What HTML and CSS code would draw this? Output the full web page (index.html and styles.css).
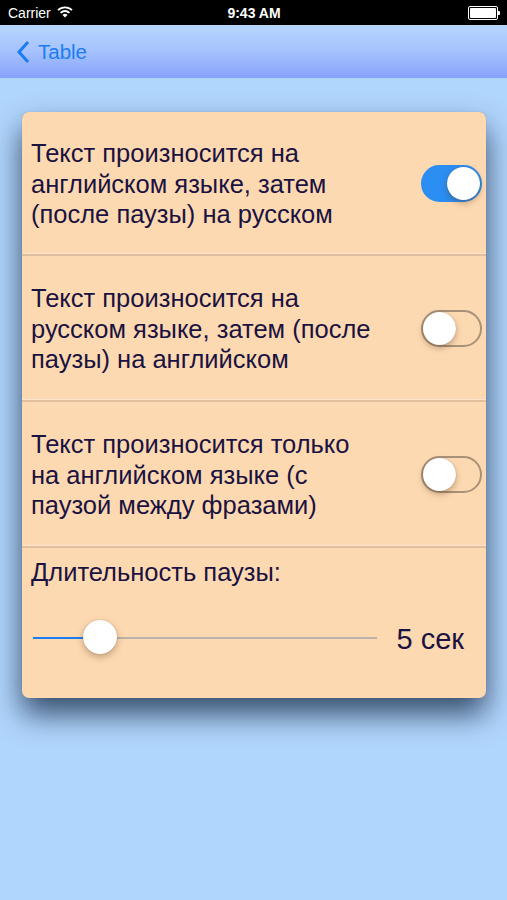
FILE: index.html
```html
<!DOCTYPE html>
<html lang="ru">
<head>
    <meta charset="UTF-8">
    <meta name="viewport" content="width=device-width, initial-scale=1.0">
    <title>Настройки</title>
    <link rel="stylesheet" href="styles.css">
</head>
<body>
    <div class="status-bar">
        <div class="status-left">
            <span>Carrier</span>
            <svg class="wifi" width="16" height="12" viewBox="0 0 16 12">
                <path d="M1 4.2 A10 10 0 0 1 15 4.2" fill="none" stroke="white" stroke-width="1.8"/>
                <path d="M3.6 6.8 A6.3 6.3 0 0 1 12.4 6.8" fill="none" stroke="white" stroke-width="1.8"/>
                <path d="M5.5 9 L8 11.5 L10.5 9 A3.5 3.5 0 0 0 5.5 9 Z" fill="white"/>
            </svg>
        </div>
        <div class="status-time">9:43 AM</div>
        <div class="status-right">
            <div class="battery"><div class="battery-fill"></div></div>
            <div class="battery-tip"></div>
        </div>
    </div>

    <div class="nav-bar">
        <a class="back-link" href="#">
            <svg width="14" height="24" viewBox="0 0 14 24">
                <path d="M12 2 L3 12 L12 22" fill="none" stroke="#1c7cf4" stroke-width="3"/>
            </svg>
            <span>Table</span>
        </a>
    </div>

    <div class="content">
        <div class="card">
            <div class="row">
                <div class="row-text">Текст произносится на английском языке, затем (после паузы) на русском</div>
                <div class="switch on"><div class="knob"></div></div>
            </div>
            <div class="row">
                <div class="row-text">Текст произносится на русском языке, затем (после паузы) на английском</div>
                <div class="switch"><div class="knob"></div></div>
            </div>
            <div class="row">
                <div class="row-text">Текст произносится только на английском языке (с паузой между фразами)</div>
                <div class="switch"><div class="knob"></div></div>
            </div>
            <div class="row-pause">
                <div class="pause-label">Длительность паузы:</div>
                <div class="slider-line">
                    <div class="slider">
                        <div class="track-filled" style="width: 67px;"></div>
                        <div class="thumb" style="left: 50px;"></div>
                    </div>
                    <div class="slider-value">5 сек</div>
                </div>
            </div>
        </div>
    </div>
</body>
</html>
```

FILE: styles.css
```css
body { margin: 0; font-family: "Liberation Sans", Arial, sans-serif; background: #b1d6fd; height: 900px; overflow: hidden; }

.status-bar { background: #000; color: white; height: 25px; display: flex; align-items: center; justify-content: space-between; padding: 0 7px 0 8px; font-size: 14px; position: relative; }
.status-left { display: flex; align-items: center; gap: 6px; width: 120px; }
.wifi { margin-top: -1px; }
.status-time { font-weight: bold; font-size: 14px; }
.status-right { display: flex; align-items: center; justify-content: flex-end; width: 120px; }
.battery { width: 26px; height: 10px; border: 1px solid white; border-radius: 2px; padding: 1px; }
.battery-fill { background: white; height: 100%; border-radius: 1px; }
.battery-tip { width: 2px; height: 4px; background: white; border-radius: 0 1px 1px 0; }

.nav-bar { height: 53px; background: linear-gradient(to bottom, #b7d6fd 0%, #a5c2fd 50%, #88a2fb 100%); display: flex; align-items: center; }
.back-link { display: flex; align-items: center; gap: 8px; margin-left: 16px; color: #1c7cf4; text-decoration: none; font-size: 20.5px; }

.content { padding: 34px 21px 0 22px; }
.card { background: #fdd9b2; border-radius: 7px; box-shadow: 0 16px 30px rgba(30, 50, 80, 0.85), 0 0 1px rgba(0, 0, 0, 0.3); overflow: hidden; }

.row { display: flex; align-items: center; justify-content: space-between; padding: 0 4px 0 9px; height: 144px; border-bottom: 2px solid #e2bf9c; box-shadow: inset 0 -1px 0 #fde6cd; }
.row:first-child { height: 142px; }
.row-text { color: #1a1240; font-size: 25.5px; line-height: 30.5px; width: 352px; margin-top: 2px; }

.switch { width: 61px; height: 37px; border-radius: 19px; border: 2px solid #a89179; box-sizing: border-box; position: relative; flex-shrink: 0; }
.switch .knob { position: absolute; top: 0; left: 0; width: 33px; height: 33px; border-radius: 50%; background: white; box-shadow: 0 3px 6px rgba(80, 50, 20, 0.35), 0 0 1px rgba(0, 0, 0, 0.3); }
.switch.on { background: #2b8ef2; border-color: #2b8ef2; }
.switch.on .knob { left: auto; right: 0; }

.row-pause { padding: 9px 22px 0 9px; height: 150px; box-sizing: border-box; }
.pause-label { color: #1a1240; font-size: 25.5px; line-height: 30px; }
.slider-line { display: flex; align-items: center; margin-top: 32px; }
.slider { position: relative; width: 344px; height: 2px; background: #b8b2aa; margin-left: 2px; }
.track-filled { position: absolute; left: 0; top: 0; height: 2px; background: #1c7cf4; }
.thumb { position: absolute; top: -17px; width: 34px; height: 34px; border-radius: 50%; background: white; box-shadow: 0 3px 7px rgba(80, 50, 20, 0.35), 0 0 1px rgba(0, 0, 0, 0.3); }
.slider-value { margin-left: auto; color: #1a1240; font-size: 29px; margin-top: 4px; }
```
